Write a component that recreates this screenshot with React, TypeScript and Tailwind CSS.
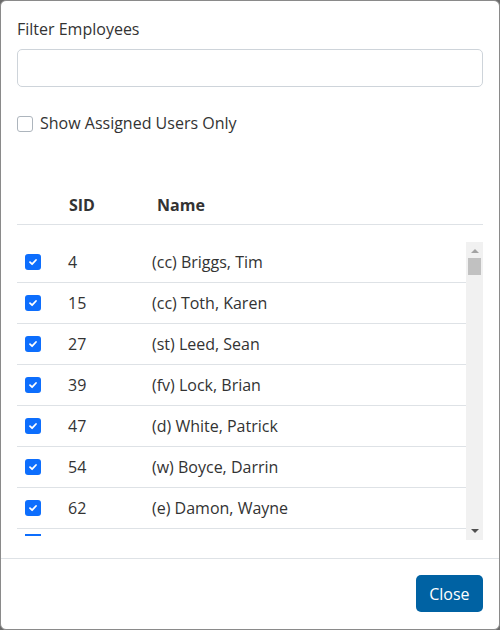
import React from "react";

const rows = [
  { sid: "4", name: "(cc) Briggs, Tim" },
  { sid: "15", name: "(cc) Toth, Karen" },
  { sid: "27", name: "(st) Leed, Sean" },
  { sid: "39", name: "(fv) Lock, Brian" },
  { sid: "47", name: "(d) White, Patrick" },
  { sid: "54", name: "(w) Boyce, Darrin" },
  { sid: "62", name: "(e) Damon, Wayne" },
  { sid: "", name: "" },
];

function Check() {
  return (
    <div className="w-4 h-4 rounded-[3px] bg-[#0d6efd] flex items-center justify-center">
      <svg width="10" height="10" viewBox="0 0 10 10">
        <path d="M2 5.2 L4.1 7.2 L8 3" stroke="white" strokeWidth="1.8" fill="none" strokeLinecap="round" strokeLinejoin="round" />
      </svg>
    </div>
  );
}

export default function App() {
  return (
    <div className="w-[500px] h-[630px] bg-[#6b6b6b] overflow-hidden" style={{ fontFamily: "'Open Sans', sans-serif" }}>
      <div className="w-[500px] h-[630px] bg-white rounded-[6px] border border-[#8a8a8a] flex flex-col text-[#333] text-[16px]">
        <div className="px-4 pt-[17px] flex-1 flex flex-col">
          <div className="leading-[22px]">Filter Employees</div>
          <div className="mt-[9px] h-[38px] border border-[#ced4da] rounded-[5px]"></div>
          <div className="mt-[28px] flex items-center gap-[7px] leading-[18px]">
            <div className="w-4 h-4 border border-[#adb5bd] rounded-[3px]"></div>
            <span className="mt-[-1px]">Show Assigned Users Only</span>
          </div>
          <div className="mt-[53px] flex font-bold border-b border-[#dee2e6] h-[40px] items-center">
            <div className="w-[52px]"></div>
            <div className="w-[88px]">SID</div>
            <div>Name</div>
          </div>
          <div className="mt-[17px] flex h-[299px]">
            <div className="flex-1 overflow-hidden">
              {rows.map((r, i) => (
                <div key={i} className="flex items-center h-[41px] border-b border-[#dee2e6]">
                  <div className="w-[51px] pl-2 flex">{r.sid ? <Check /> : <div className="w-4 h-4 border-t-2 border-[#0d6efd] mt-[-14px]"></div>}</div>
                  <div className="w-[84px]">{r.sid}</div>
                  <div>{r.name}</div>
                </div>
              ))}
            </div>
            <div className="w-[17px] bg-[#f1f1f1] flex flex-col items-center mb-[1px]">
              <svg width="8" height="5" viewBox="0 0 8 5" className="mt-[6px]"><path d="M0 5 L4 1 L8 5Z" fill="#a3a3a3" /></svg>
              <div className="w-[13px] h-[17px] bg-[#c1c1c1] mt-[5px]"></div>
              <div className="flex-1"></div>
              <svg width="8" height="5" viewBox="0 0 8 5" className="mb-[6px]"><path d="M0 0 L4 4 L8 0Z" fill="#505050" /></svg>
            </div>
          </div>
        </div>
        <div className="border-t border-[#dee2e6] h-[71px] flex items-start justify-end px-4 pt-[16px]">
          <button className="h-[37px] px-[13.5px] rounded-[5px] bg-[#0062a3] text-white">Close</button>
        </div>
      </div>
    </div>
  );
}
